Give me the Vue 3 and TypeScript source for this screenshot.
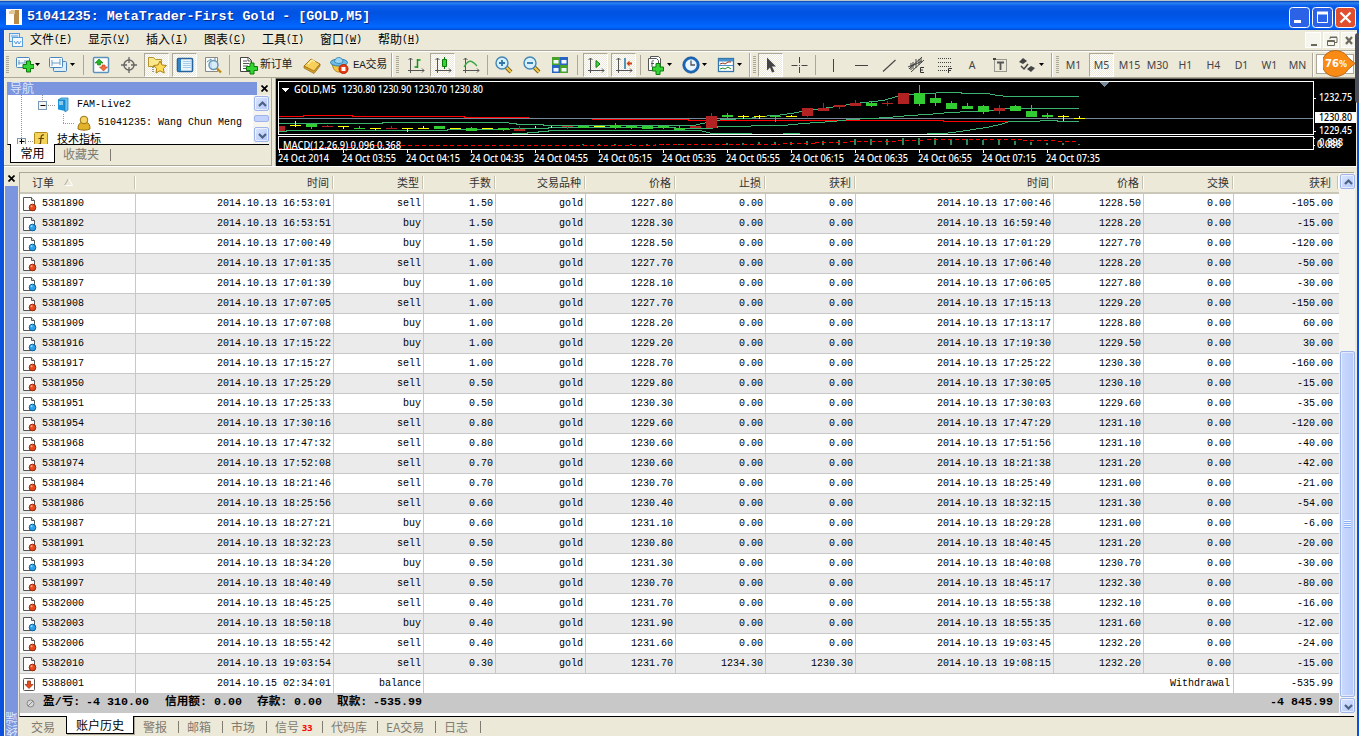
<script setup lang="ts">
type Tool = [kind: string, gap: number, width: number, label?: string]

const glyphs: Record<string, string> = {
  newchart: '<rect x="2.500" y="2.500" width="13" height="10" rx="1" fill="#f4faff" stroke="#4a86b8"/><path d="M5 5v5M4 8h8M11 5v3" stroke="#6f9cc0" fill="none"/><path d="M9 9.500h3.500V6h4v3.500H20v4h-3.500V17h-4v-3.500H9z" fill="#35d435" stroke="#0a7a0a"/>',
  profiles: '<rect x="5.500" y="6.500" width="13" height="10" rx="1" fill="#dcecf8" stroke="#4a86b8"/><rect x="1.500" y="2.500" width="13" height="10" rx="1" fill="#f8fcff" stroke="#4a86b8"/><path d="M4 5v6M12 4v6M4 8h8" stroke="#6f9cc0" fill="none"/>',
  market: '<rect x="2.500" y="2.500" width="15" height="15" rx="1" fill="#fff" stroke="#5b93bd" stroke-width="1.500"/><path d="M8 4l4 4H9.500v2h-3V8H4z" fill="#28b428" stroke="#0a7a0a" stroke-width=".6"/><path d="M12.500 16l-4-4H11v-2h3v2h2.500z" fill="#f07040" stroke="#b33810" stroke-width=".6"/>',
  target: '<circle cx="10" cy="10" r="5" fill="none" stroke="#666" stroke-width="1.400"/><path d="M10 2v6M10 12v6M2 10h6M12 10h6" stroke="#666" stroke-width="1.300"/>',
  favorites: '<path d="M1.500 11.500v-9h5l2 2h6v7z" fill="#fbe88c" stroke="#b5932d"/><path d="M6 12v6" stroke="#444" stroke-dasharray="1 1"/><path d="M13 6l2 4 4.500.5-3.200 3 .9 4.500-4.200-2.200L9 18l.7-4.500-3.200-3L11 10z" fill="#ffdc55" stroke="#ad8018"/>',
  panel: '<rect x="2.500" y="3.500" width="15" height="13" rx="1" fill="#e9f5ff" stroke="#27649b" stroke-width="1.600"/><path d="M3 4h3v12H3z" fill="#3782c0"/><path d="M8 6.500h8M8 8.500h8M8 10.500h8M8 12.500h8" stroke="#a8cde8"/>',
  tester: '<path d="M2.500 2.500h12v14h-12z" fill="#fafafa" stroke="#888"/><path d="M4 7l4-3v10M12 3v4" stroke="#5c91b6" fill="none"/><circle cx="10.500" cy="10" r="4.500" fill="#c8e6f8bb" stroke="#6794b4" stroke-width="1.400"/><path d="M14 13.500l4 4" stroke="#c08d17" stroke-width="2.400"/>',
  order: '<path d="M2.500 2.500h8l3 3v11h-11z" fill="#fff" stroke="#444"/><path d="M10 3v3h3M5 6h4M5 8.500h6M5 11h5M5 13.500h4" stroke="#555" fill="none"/><path d="M8.500 11.500H12V8h4v3.500h3.500v4H16V19h-4v-3.500H8.500z" fill="#35d435" stroke="#0a7a0a"/>',
  gold: '<path d="M2 11l7-7 9 5-6 8z" fill="#f8cf58" stroke="#a87818"/><path d="M2 11v2l10 5.500 6-7.500V9l-6 7z" fill="#d99f28" stroke="#946a15" stroke-width=".7"/><path d="M6 9l4-4 3 2" fill="none" stroke="#fff3b0" stroke-width="1.300"/>',
  expert: '<path d="M3 8c1 6 3 9 7 9s6-3 7-8z" fill="#f4c543" stroke="#ad8119"/><ellipse cx="10" cy="7.500" rx="8.500" ry="3.500" fill="#6ebbe5" stroke="#3180ad"/><path d="M5.500 7c0-6 8.500-6 8.500 0-2 2-6 2-8.500 0z" fill="#9ad6f3" stroke="#3f8db9"/><circle cx="14.500" cy="14" r="4.500" fill="#e63c14" stroke="#b62300"/><path d="M12.500 12h4v4h-4z" fill="#fff"/>',
  bars: '<path d="M4.500 3v15M2 15.500h16M2.500 5l2-2 2 2M16 13.500l2 2-2 2" stroke="#555" fill="none"/><path d="M11.500 4v9M11.500 5h3M8.500 12h3" stroke="#159321" stroke-width="1.500" fill="none"/>',
  candles: '<path d="M4.500 3v15M2 15.500h16M2.500 5l2-2 2 2M16 13.500l2 2-2 2" stroke="#555" fill="none"/><path d="M11.500 2v12" stroke="#0a7a0a"/><path d="M9.500 4.500h4v7h-4z" fill="#35d435" stroke="#0a7a0a"/>',
  line: '<path d="M4.500 3v15M2 15.500h16M2.500 5l2-2 2 2M16 13.500l2 2-2 2" stroke="#555" fill="none"/><path d="M3 12c4-7 7-8 13-1" stroke="#39a845" stroke-width="1.300" fill="none"/>',
  zoomin: '<path d="M12 12l5 5" stroke="#765711" stroke-width="4"/><path d="M12 12l5 5" stroke="#edc64a" stroke-width="2.400"/><circle cx="8" cy="8" r="6" fill="#d6f0fe" stroke="#4387b5" stroke-width="1.400"/><path d="M5 8h6M8 5v6" stroke="#2f77a8" stroke-width="1.800"/>',
  zoomout: '<path d="M12 12l5 5" stroke="#765711" stroke-width="4"/><path d="M12 12l5 5" stroke="#edc64a" stroke-width="2.400"/><circle cx="8" cy="8" r="6" fill="#d6f0fe" stroke="#4387b5" stroke-width="1.400"/><path d="M5 8h6" stroke="#2f77a8" stroke-width="1.800"/>',
  tile: '<path d="M2 2h8v8H2zM10 10h8v8h-8z" fill="#48a22a"/><path d="M10 2h8v8h-8zM2 10h8v8H2z" fill="#2864c4"/><path d="M3.500 5h5v3.500h-5zM11.500 5h5v3.500h-5zM3.500 13h5v3.500h-5zM11.500 13h5v3.500h-5z" fill="#eff8ff"/>',
  scroll: '<path d="M4.500 3v15M2 15.500h16M2.500 5l2-2 2 2M16 13.500l2 2-2 2" stroke="#555" fill="none"/><path d="M10 5.500v7l4-3.500z" fill="#4bd24b" stroke="#0a7a0a"/>',
  shift: '<path d="M4.500 3v15M2 15.500h16M2.500 5l2-2 2 2M16 13.500l2 2-2 2" stroke="#555" fill="none"/><path d="M11 3v11" stroke="#2377a8" stroke-width="1.500"/><path d="M12.500 8.500l3-3v2H18v2h-2.500v2z" fill="#ce4210"/>',
  indicators: '<path d="M5.500 1.500h8l2 2v10h-10z" fill="#fff" stroke="#555"/><path d="M3.500 3.500h8l2 2v10h-10z" fill="#fff" stroke="#555"/><path d="M9 6c-2-1-2 0-2 3v3M6 8.500h3" stroke="#555" fill="none"/><path d="M7.500 12H11V8.500h4V12h3.500v4H15v3.500h-4V16H7.500z" fill="#35d435" stroke="#0a7a0a"/>',
  clock: '<circle cx="10" cy="10" r="7" fill="#e8f6ff" stroke="#1b67b8" stroke-width="2.600"/><circle cx="10" cy="10" r="8.200" fill="none" stroke="#154a87" stroke-width=".6"/><path d="M10 5.500V10h4" stroke="#555" stroke-width="1.300" fill="none"/>',
  template: '<rect x="2.500" y="3.500" width="15" height="13" fill="#fff" stroke="#3276ac" stroke-width="1.300"/><path d="M3 4h14v2.500H3zM3 10h14v1H3z" fill="#4a92c8"/><path d="M4 9l3-1 2 1 3-2h3" stroke="#9a3418" fill="none"/><path d="M4 14l3-1 2 1 3-2 3 2" stroke="#208b2c" fill="none"/>',
  cursor: '<path d="M6 2.500v13l3-3 2 5 2.500-1-2.500-5h4z" fill="#444"/>',
  cross: '<path d="M10.500 2v6M10.500 12v6M2.500 10.500h6M12.500 10.500h6" stroke="#444"/><path d="M10 10h1v1h-1z" fill="#444"/>',
  vline: '<path d="M10.500 4v13" stroke="#444"/>',
  hline: '<path d="M4 10.500h13" stroke="#444"/>',
  trend: '<path d="M4 16.500L16.500 5" stroke="#444" stroke-width="1.100"/>',
  channel: '<path d="M2 14L15 2M4 17L17 5M4 8v7M6 7v7M9 4v9M12 4v6M14 3v5M1 12l7-3M5 11l10-5" stroke="#444" stroke-width="1" fill="none"/><path d="M17 12.500h-3.500v5H17M13.500 15H16" stroke="#333" fill="none"/>',
  fibo: '<path d="M3 3.500h14M3 7.500h14M3 11.500h14M3 15.500h9" stroke="#444" stroke-dasharray="1 1"/><path d="M17 13.500h-3.500V18M13.500 15.500H16" stroke="#333" fill="none"/>',
  label: '<rect x="4.500" y="4.500" width="12" height="12" fill="none" stroke="#444" stroke-dasharray="1 1"/><path d="M3 3h3v2H3z" fill="#444"/><path d="M7 7.500h7M10.500 7.500V15" stroke="#555" stroke-width="1.800"/>',
  arrows: '<path d="M2 7l4-4 4 3-4 3zM10 14l4-3 4 2-4 4zM6 9v2" fill="#444"/><path d="M4 11l3 3 4-5" fill="none" stroke="#444" stroke-width="1.500"/>',
}

const tools: Tool[] = [
  ['grip', 0, 6], ['newchart', 4, 20], ['arrow', 0, 7], ['profiles', 7, 20], ['arrow', 0, 8], ['sep', 5, 5],
  ['market', 2, 25], ['target', 3, 25], ['favorites*', 3, 25], ['panel*', 3, 25], ['tester', 3, 25], ['sep', 2, 5],
  ['order', 3, 25], ['caps', 0, 39, '新订单'], ['gold', 0, 25], ['expert', 2, 25], ['caps', 2, 36, 'EA交易'], ['end', 1, 4], ['grip', 0, 6],
  ['bars', 3, 25], ['candles*', 2, 25], ['line', 3, 25], ['sep', 2, 5], ['zoomin', 1, 25], ['zoomout', 3, 25], ['tile', 3, 25], ['sep', 3, 5],
  ['scroll*', 3, 25], ['shift*', 3, 25], ['sep', 2, 5], ['indicators', 1, 22], ['arrow', 0, 7], ['clock', 7, 21], ['arrow', 0, 7], ['template', 7, 21], ['arrow', 0, 7],
  ['end', 5, 3], ['grip', 0, 6], ['cursor*', 1, 25], ['cross', 3, 25], ['sep', 2, 5], ['vline', 2, 25], ['hline', 3, 25], ['trend', 3, 25], ['channel', 3, 25],
  ['fibo', 3, 25], ['period', 3, 24, 'A'], ['label', 3, 25], ['arrows', 4, 22], ['arrow', 0, 7], ['end', 6, 2], ['grip', 1, 6],
  ['period', 1, 25, 'M1'], ['period*', 3, 25, 'M5'], ['period', 3, 25, 'M15'], ['period', 3, 25, 'M30'], ['period', 3, 25, 'H1'],
  ['period', 3, 25, 'H4'], ['period', 3, 25, 'D1'], ['period', 3, 25, 'W1'], ['period', 3, 25, 'MN'], ['end', 1, 3],
]
const kind = (t: Tool) => t[0].replace('*', '')

const menus = [['文件', 'F'], ['显示', 'V'], ['插入', 'I'], ['图表', 'C'], ['工具', 'T'], ['窗口', 'W'], ['帮助', 'H']]

const heads = ['时间', '类型', '手数', '交易品种', '价格', '止损', '获利', '时间', '价格', '交换', '获利']

const orders = `5381890|16:53:01|sell|1.50|1227.80|17:00:46|1228.50|-105.00
5381892|16:53:51|buy|1.50|1228.30|16:59:40|1228.20|-15.00
5381895|17:00:49|buy|1.50|1228.50|17:01:29|1227.70|-120.00
5381896|17:01:35|sell|1.00|1227.70|17:06:40|1228.20|-50.00
5381897|17:01:39|buy|1.00|1228.10|17:06:05|1227.80|-30.00
5381908|17:07:05|sell|1.00|1227.70|17:15:13|1229.20|-150.00
5381909|17:07:08|buy|1.00|1228.20|17:13:17|1228.80|60.00
5381916|17:15:22|buy|1.00|1229.20|17:19:30|1229.50|30.00
5381917|17:15:27|sell|1.00|1228.70|17:25:22|1230.30|-160.00
5381950|17:25:29|sell|0.50|1229.80|17:30:05|1230.10|-15.00
5381951|17:25:33|buy|0.50|1230.30|17:30:03|1229.60|-35.00
5381954|17:30:16|sell|0.80|1229.60|17:47:29|1231.10|-120.00
5381968|17:47:32|sell|0.80|1230.60|17:51:56|1231.10|-40.00
5381974|17:52:08|sell|0.70|1230.60|18:21:38|1231.20|-42.00
5381984|18:21:46|sell|0.70|1230.70|18:25:49|1231.00|-21.00
5381986|18:25:56|sell|0.60|1230.40|18:32:15|1231.30|-54.00
5381987|18:27:21|buy|0.60|1231.10|18:29:28|1231.00|-6.00
5381991|18:32:23|sell|0.50|1230.80|18:40:45|1231.20|-20.00
5381993|18:34:20|buy|0.50|1231.30|18:40:08|1230.70|-30.00
5381997|18:40:49|sell|0.50|1230.70|18:45:17|1232.30|-80.00
5382000|18:45:25|sell|0.40|1231.70|18:55:38|1232.10|-16.00
5382003|18:50:18|buy|0.40|1231.90|18:55:35|1231.60|-12.00
5382006|18:55:42|sell|0.40|1231.60|19:03:45|1232.20|-24.00
5382010|19:03:54|sell|0.30|1231.70|19:08:15|1232.20|-15.00`
  .split('\n')
  .map((l) => {
    const [id, open, side, lots, price, close, exit, profit] = l.split('|')
    const last = id === '5382010'
    return {
      id,
      side,
      cells: ['2014.10.13 ' + open, side, lots, 'gold', price, last ? '1234.30' : '0.00', last ? '1230.30' : '0.00', '2014.10.13 ' + close, exit, '0.00', profit],
    }
  })

// Chart geometry is kept in thirds of a pixel, left edge of the pane = 0.
const candleData = `r144-159|y142-145,128-147|g137-147,137-152|r144-147,141-147|y144-147,144-152|g150-153,144-154|y150-153,151-156|r150-153,144-153|y150-153,151-161|y150-153,145-152|g144-152|y150-153|g151-158,146-158|y150-153|g151-155,151-158|r152-158,145-158|w,144-149|w,144-149|r144-148,144-152|g143-150|y144-147|g141-150,135-154|g143-150,140-152|g143-152|g143-150,140-152|g151-155,143-155|r144-151|r114-149,105-149|g111-117,105-120|y114-117,111-124|y114-117,111-122|g114-117,111-131|y114-117,111-117|r90-114,90-117|r90-99,75-99|r81-87,81-92|r75-84,66-84|g75-84,72-87|r75-78,70-84|r45-77|g45-78,21-84|g60-75,46-83|g75-93,69-93|g84-93,75-93|g84-102,81-107|r90-99,81-107|g84-99,80-99|g99-117,81-117|g111-117,105-122|y114-117,111-130|y120-123,114-122`
const tint: Record<string, string> = { r: '#b22222', g: '#32cd32', y: '#ffff00', w: '#ffff00' }
const third = (n: number) => Math.round(n / 3)
const candles = candleData.split('|').map((s, i) => {
  const [body, wick] = s.slice(1).split(',')
  const b = body ? body.split('-').map(Number) : null
  const w = wick ? wick.split('-').map(Number) : null
  return {
    color: tint[s[0]],
    x: 4 + i * 16,
    by: b ? third(b[0]) : 0,
    bh: b ? Math.max(1, third(b[1]) - third(b[0])) : 0,
    wy: w ? third(w[0]) : 0,
    wh: w ? third(w[1]) - third(w[0]) : 0,
  }
})

const steps = (pts: number[]) => {
  let out = ''
  for (let i = 0; i < pts.length; i += 2) out += `${i ? 'L' : 'M'}${third(pts[i])} ${third(pts[i + 1] - 1) + 0.5}`
  return out
}
const green = [
  steps([10, 137, 320, 137, 324, 133, 700, 133, 705, 137, 722, 137, 725, 139, 803, 139, 808, 142, 1260, 142, 1265, 138, 1285, 135, 1305, 130, 1345, 124, 1425, 121, 1450, 115, 1505, 112, 1565, 104, 1595, 98, 1665, 87, 1740, 75, 1825, 66, 1845, 61, 1875, 52, 1925, 49, 2005, 43, 2055, 43, 2065, 46, 2135, 46, 2170, 51, 2195, 55, 2412, 55]),
  steps([10, 160, 33, 160, 36, 157, 515, 157, 520, 154, 700, 154, 710, 151, 815, 151, 825, 148, 1200, 148, 1205, 151, 1305, 151, 1335, 146, 1425, 146, 1430, 143, 1525, 143, 1585, 137, 1675, 129, 1725, 125, 1785, 122, 1840, 118, 1905, 111, 1955, 108, 2025, 104, 2085, 101, 2145, 97, 2195, 92, 2412, 92]),
  steps([710, 166, 755, 166, 758, 163, 790, 163, 793, 160, 818, 160, 821, 157, 1275, 157, 1300, 163, 1310, 166, 1430, 166]),
  steps([1525, 166, 1575, 166]),
  steps([1955, 166, 2005, 166, 2035, 162, 2095, 153, 2135, 147, 2175, 139, 2205, 131, 2290, 131, 2300, 127, 2345, 127, 2350, 131, 2412, 131]),
]
const red = steps([10, 116, 84, 116, 84, 113, 231, 113, 231, 116, 567, 116, 567, 119, 759, 119, 759, 122, 951, 122, 951, 125, 1239, 125, 1239, 128, 2005, 128, 2005, 131, 2215, 131])
const signal = [
  steps([10, 212, 120, 212, 120, 208, 230, 208, 230, 203, 1140, 203, 1140, 199, 1515, 199]),
  steps([1525, 197, 1620, 197]), steps([1620, 194, 1722, 194]), steps([1725, 191, 1865, 191]), steps([1868, 188, 1950, 188]),
  steps([1955, 185, 2245, 185]), steps([2245, 188, 2345, 188]), steps([2350, 191, 2412, 191]),
]
const macd = [199, 199, 199, 199, 199, 199, 199, 199, 199, 195, 195, 192, 192, 192, 190, 190, 186, 183, 183, 182, 180, 180, 180, 183, 183, 185, 186, 190, 192, 195, 195, 198]
  .map((v, i) => ({ x: 307 + i * 16, y: third(v), h: Math.max(1, 67 - third(v)) }))
const times = ['24 Oct 2014', '03:55', '04:15', '04:35', '04:55', '05:15', '05:35', '05:55', '06:15', '06:35', '06:55', '07:15', '07:35']
  .map((t, i) => ({ x: 3 + i * 64, text: i ? '24 Oct ' + t : t, w: i ? 54 : 51 }))
const labels = [
  { x: 19, y: 15, w: 42, text: 'GOLD,M5' }, { x: 67, y: 15, w: 141, text: '1230.80 1230.90 1230.70 1230.80' },
  { x: 8, y: 71, w: 118, text: 'MACD(12,26,9) 0.096 0.368' },
  { x: 1044, y: 23, w: 33, text: '1232.75' }, { x: 1044, y: 56, w: 33, text: '1229.45' },
  { x: 1044, y: 68, w: 24, text: '0.898' }, { x: 1042, y: 70, w: 24, text: '0.086' },
  ...times.map((t) => ({ ...t, y: 84 })),
]

const summary = [['盈/亏:', '-4 310.00', 43, 79], ['信用额:', '0.00', 49, 43], ['存款:', '0.00', 37, 43], ['取款:', '-535.99', 36, 80]] as const
const tabs = [['警报', 44], ['邮箱', 44], ['市场', 44], ['信号', 56], ['代码库', 55], ['EA交易', 58], ['日志', 45]] as const
</script>

<template>
  <div class="window">
    <header class="title">
      <svg class="logo" width="16" height="16"><rect width="16" height="16" fill="#fff" /><path d="M3 3l3-2h7v14H8V5H3z" fill="#b98b48" /><path d="M3 3l3-2h3v4H3z" fill="#e2c896" /></svg>
      <span class="caption">51041235: MetaTrader-First Gold - [GOLD,M5]</span>
      <div class="winbtns">
        <svg width="21" height="21"><rect class="wb" x=".5" y=".5" width="20" height="20" rx="3" /><path d="M5 13h7v3H5z" fill="#fff" /></svg>
        <svg width="21" height="21"><rect class="wb" x=".5" y=".5" width="20" height="20" rx="3" /><path d="M5.500 6v9.500h10V6M5 6h11" fill="none" stroke="#fff" /><path d="M5 4.500h11v3H5z" fill="#fff" /></svg>
        <svg width="21" height="21"><rect class="wb close" x=".5" y=".5" width="20" height="20" rx="3" /><path d="M5.500 5.500l10 10M15.500 5.500l-10 10" stroke="#fff" stroke-width="2.200" /></svg>
      </div>
    </header>

    <div class="client">
      <nav class="menu">
        <svg class="mlogo" width="14" height="14"><rect x=".5" y=".5" width="10" height="8" fill="#dff0fc" stroke="#5b9bd8" /><rect x="3.500" y="4.500" width="10" height="9" fill="#f4fbff" stroke="#5b9bd8" /><path d="M5 8l2 3 1.500-3 1.500 3 2-3M2 3h7" fill="none" stroke="#5b9bd8" /></svg>
        <span v-for="m in menus" :key="m[1]" class="mi">{{ m[0] }}<i>(<u>{{ m[1] }}</u>)</i></span>
        <div class="mdi">
          <svg width="16" height="16"><path d="M5 11h6v2H5z" fill="#6b685c" /></svg>
          <svg width="16" height="16"><path d="M6 6V4.500h7v5h-2M6 4h7" stroke="#6b685c" fill="none" /><path d="M3.500 7.500h7v5h-7zM3 8.500h7" stroke="#6b685c" fill="none" /></svg>
          <svg width="16" height="16"><path d="M4 4l6 7M10 4l-6 7" stroke="#6b685c" stroke-width="2.200" /></svg>
        </div>
      </nav>

      <div class="toolbar">
        <div v-for="(t, i) in tools" :key="i" class="tool" :class="[kind(t), { on: t[0].endsWith('*') }]" :style="{ marginLeft: t[1] + 'px', width: t[2] + 'px' }">
          <svg v-if="glyphs[kind(t)]" width="20" height="20" v-html="glyphs[kind(t)]"></svg>
          <svg v-else-if="t[0] === 'arrow'" width="5" height="3"><path d="M0 0h5L2.500 3z" /></svg>
          <template v-else>{{ t[3] }}</template>
        </div>
        <div class="field"></div>
      </div>

      <section class="upper">
        <aside class="navigator">
          <div class="navhead"><span class="navtitle">导航</span><svg width="7" height="7"><path d="M.5.5l6 6M6.500.5l-6 6" stroke="#000" stroke-width="1.700" /></svg></div>
          <div class="treebox">
            <div class="tree">
              <svg class="guides" width="246" height="49">
                <path d="M13.500 0v49M34.500 0v5M40 10.500h8M55.500 19v9M55 28.500h12M20 46.500h6" fill="none" stroke="#999" stroke-dasharray="1 1" />
                <rect x="30.500" y="6.500" width="8" height="8" fill="#f4f3ee" stroke="#7898b5" /><path d="M32.500 10.500h5" stroke="#000" />
                <rect x="9.500" y="43.500" width="8" height="8" fill="#f4f3ee" stroke="#7898b5" /><path d="M11.500 46.500h5M13.500 44v5" stroke="#000" />
              </svg>
              <div class="node n1"><svg width="12" height="16"><path d="M1 3l7-2v13l-7-1.500z" fill="#1a94dc" /><path d="M1 3l3-2h7v12l-3 2V3z" fill="#6fc5f2" stroke="#1379b8" stroke-width=".7" /><path d="M2 5h4M2 7h4" stroke="#fff" /></svg>FAM-Live2</div>
              <div class="node n2"><svg width="14" height="16"><path d="M1 14c0-5 2-6 4-7h4c3 1 4 3 4 7-3 1.500-9 1.500-12 0z" fill="#e2b32a" stroke="#9a7410" /><circle cx="7" cy="5" r="3.800" fill="#f5d568" stroke="#9a7410" /></svg>51041235: Wang Chun Meng</div>
              <div class="node n3"><svg width="14" height="12"><rect x=".5" y=".5" width="13" height="13" rx="1" fill="#f5d358" stroke="#b28a1c" /><path d="M10 3C7 2 7 5 6.500 11c0 1-1 1.500-2 1M4.500 6.500H10" fill="none" stroke="#634400" stroke-width="1.200" /></svg><span>技术指标</span></div>
            </div>
            <div class="vbar small">
              <svg width="15" height="15" class="sb"><path d="M4 9l3.500-3.500L11 9" /></svg>
              <div class="mini"></div>
              <svg width="15" height="15" class="sb"><path d="M4 6l3.500 3.500L11 6" /></svg>
            </div>
          </div>
          <div class="navtabs"><b>常用</b><span>收藏夹</span><em></em></div>
        </aside>

        <svg class="chart" width="1081" height="88" shape-rendering="crispEdges">
          <rect width="1081" height="88" fill="#000" /><rect width="1081" height="1" fill="#716f64" /><rect width="1" height="88" fill="#aca899" />
          <path :d="red" fill="none" stroke="#f00" />
          <path d="M4 40.500h1035" stroke="#778899" />
          <path v-for="(g, i) in green" :key="i" :d="g" fill="none" stroke="#3cb371" />
          <g v-for="(c, i) in candles" :key="'c' + i" :fill="c.color">
            <rect :x="i ? c.x + 11 - 16 : 4" :y="c.by" :width="i ? 11 : 6" :height="c.bh" /><rect :x="c.x" :y="c.wy" width="1" :height="c.wh" />
          </g>
          <rect v-for="(m, i) in macd" :key="'m' + i" :x="m.x" :y="m.y" width="2" :height="m.h" fill="#2e8b57" />
          <path v-for="(s, i) in signal" :key="'s' + i" :d="s" fill="none" stroke="#f00" stroke-dasharray="4 3" />
          <path d="M3.500 3.500h1035v53h-1035zM3.500 58.500h1035v13h-1035z" fill="none" stroke="#fff" />
          <path d="M1039 20.500h2M1039 53.500h2M1039 60.500h1M1039 67.500h1" stroke="#fff" />
          <path d="M7 10h7l-3.500 4z" fill="#fff" /><path d="M825 4h9l-4.500 5z" fill="#778899" />
          <path v-for="t in times" :key="t.x" :d="`M${t.x + 1.5} 72v3`" stroke="#fff" />
          <g class="ct">
            <text v-for="(l, i) in labels" :key="i" :x="l.x" :y="l.y" :textLength="l.w" lengthAdjust="spacingAndGlyphs">{{ l.text }}</text>
            <rect x="1040" y="34" width="41" height="11" fill="#fff" />
            <text x="1044" y="43" textLength="33" lengthAdjust="spacingAndGlyphs" class="now">1230.80</text>
          </g>
        </svg>
      </section>

      <section class="lower">
        <div class="strip"><svg width="7" height="7"><path d="M.5.5l6 6M6.500.5l-6 6" stroke="#000" stroke-width="1.700" /></svg><div class="bar"><span>终端</span></div></div>
        <div class="terminal">
          <div class="gridwrap">
            <div class="table">
              <div class="row head"><div>订单 <svg width="9" height="8"><path d="M.5 7.500L4.500.5" stroke="#aca899" /><path d="M4.500.5l4 7h-8" stroke="#fff" fill="none" /></svg></div><div v-for="(h, i) in heads" :key="i">{{ h }}</div></div>
              <div v-for="o in orders" :key="o.id" class="row">
                <div>
                  <svg width="15" height="16"><path d="M1.500 1.500h8l3 3v10h-11z" fill="#fff" stroke="#555" /><path d="M9.500 1.500v3h3" fill="#ddd" stroke="#555" /><circle cx="10.500" cy="11.500" r="3.300" :fill="o.side === 'buy' ? '#2ba0e8' : '#e84a1c'" :stroke="o.side === 'buy' ? '#0a5f9c' : '#9a2400'" /><circle cx="9.500" cy="10.300" r="1" fill="#fff" opacity=".6" /></svg>{{ o.id }}
                </div>
                <div v-for="(c, i) in o.cells" :key="i">{{ c }}</div>
              </div>
              <div class="row balance">
                <div><svg width="15" height="16"><rect x="1.500" y="2.500" width="11" height="12" rx="1" fill="#fff" stroke="#555" /><path d="M5.500 5h3v3.500H11L7 12.500 3 8.500h2.500z" fill="#e84a1c" stroke="#8c2a08" stroke-width=".7" /></svg>5388001</div>
                <div>2014.10.15 02:34:01</div><div>balance</div><div class="wide">Withdrawal</div><div>-535.99</div>
              </div>
              <div class="sum">
                <svg width="9" height="9"><circle cx="4.500" cy="4.500" r="3.500" fill="#d8d8d8" stroke="#888" /><path d="M2 7l5-5" stroke="#888" /></svg>
                <template v-for="s in summary" :key="s[0]"><span :style="{ width: s[2] + 'px' }">{{ s[0] }}</span><span :style="{ width: s[3] + 'px' }">{{ s[1] }}</span></template>
                <strong>-4 845.99</strong>
              </div>
            </div>
            <div class="vbar">
              <svg width="15" height="15" class="sb"><path d="M4 9l3.500-3.500L11 9" /></svg>
              <div class="track"></div>
              <div class="thumb"><i></i></div>
              <svg width="15" height="15" class="sb"><path d="M4 6l3.500 3.500L11 6" /></svg>
            </div>
          </div>
          <div class="tabs">
            <span class="t0">交易</span><b>账户历史</b>
            <span v-for="t in tabs" :key="t[0]" class="t" :style="{ width: t[1] + 'px' }">{{ t[0] }}<sub v-if="t[0] === '信号'">33</sub></span>
          </div>
        </div>
      </section>
    </div>
    <div class="edge"></div>
    <svg class="badge" width="34" height="30"><path d="M12 1.500c6 0 11 3 13 7l7 6-7 6c-2 4-7 7-13 7A13 13 0 0 1 12 1.500z" fill="#f98a14" stroke="#b96a1c" stroke-width="1" /><text x="2" y="18" textLength="14" lengthAdjust="spacingAndGlyphs" class="big">76</text><text x="16" y="18" textLength="8" lengthAdjust="spacingAndGlyphs" class="pct">%</text></svg>
  </div>
</template>

<style>
body { margin: 0; overflow: hidden; }
</style>

<style scoped>
* { box-sizing: border-box; }
svg { display: block; flex: none; }
.window { position: relative; width: 1359px; height: 736px; display: flex; flex-direction: column; background: #0a51df; font: 12px/1 "Liberation Mono", "Noto Sans CJK SC", monospace; overflow: hidden; white-space: nowrap; }
.title { height: 30px; flex: none; display: flex; align-items: center; padding: 3px 3px 0 6px; border-top: 1px solid #b9c3cc; background: linear-gradient(#0a3fb0 0, #2a83f5 2px, #0a5ce8 5px, #0053e1 12px, #0058ec 18px, #0068ff 25px, #0060f4 27px, #003fc0 30px); }
.caption { margin-left: 5px; font-size: 13.300px; font-weight: bold; color: #fff; text-shadow: 1px 1px #0b2b83; }
.winbtns { margin-left: auto; display: flex; gap: 2px; }
.wb { fill: #2c63e6; stroke: #fff; }
.wb.close { fill: #e1502e; }
.client { flex: 1; min-height: 0; display: flex; flex-direction: column; margin: 0 2px 0 4px; background: #ece9d8; box-shadow: inset 1px 0 #fff8; }
.menu { height: 20px; flex: none; display: flex; align-items: center; padding: 0 0 1px 5px; }
.mi { width: 42px; margin-right: 16px; display: flex; align-items: center; color: #000; font-family: "Noto Sans CJK SC", sans-serif; padding-bottom: 1px; }
.mlogo { margin-right: 7px; }
.mi i { font: 10px "Liberation Mono", monospace; }
.mdi { margin-left: auto; display: flex; gap: 2px; }
.mdi svg { background: #f6f5ee; border: 1px solid #fff; }
.toolbar { height: 28px; flex: none; display: flex; align-items: center; border-top: 1px solid #aca899; border-bottom: 1px solid #aca899; box-shadow: inset 0 1px #fff; padding-top: 1px; }
.tool { height: 24px; flex: none; display: flex; align-items: center; justify-content: center; color: #444; border: 1px solid transparent; }
.tool.on { background: repeating-conic-gradient(#fff 0 25%, #ece9d8 0 50%) 0 0 / 2px 2px; border-color: #aca899 #fff #fff #aca899; }
.tool.period { font: 10.500px "Noto Sans", sans-serif; }
.tool.caps { font: 11px "Liberation Mono", "Noto Sans CJK SC", monospace; justify-content: flex-start; border: 0; color: #222; padding-bottom: 3px; letter-spacing: -.3px; }
.tool.grip { border: 0; background: repeating-linear-gradient(#aca899 0 1px, #fff0 1px 2px) center / 3px 18px no-repeat; }
.tool.sep { border: 0; background: linear-gradient(#aca899, #aca899) center / 1px 20px no-repeat; }
.tool.end { border: 0; background: linear-gradient(90deg, #aca899 50%, #fff 50%) center / 2px 26px no-repeat; }
.tool.arrow { border: 0; }
.field { flex: 1; align-self: stretch; margin: 2px 3px 3px 2px; background: #fff; border: 1px solid #aca899; }
.upper { height: 89px; flex: none; display: flex; border-bottom: 1px solid #fff; }
.navigator { width: 268px; margin-right: 3px; border-right: 1px solid #aca899; border-bottom: 1px solid #aca899; height: 88px; padding: 2px 2px 0 3px; display: flex; flex-direction: column; }
.navhead { height: 15px; display: flex; align-items: center; padding-top: 1px; }
.navtitle { width: 250px; height: 13px; margin-right: 4px; background: #7b96df; color: #dde6fa; padding-left: 3px; line-height: 12px; font-family: "Noto Sans CJK SC", sans-serif; }
.treebox { height: 50px; display: flex; border-bottom: 1px solid #000; border-left: 1px solid #aca899; background: #fff; overflow: hidden; }
.tree { position: relative; width: 246px; overflow: hidden; font-size: 10px; }
.guides { position: absolute; left: 0; top: 0; }
.node { position: relative; display: flex; align-items: center; height: 19px; }
.n1 { padding-left: 49px; gap: 8px; }
.n2 { padding-left: 69px; gap: 7px; height: 18px; }
.n3 { padding-left: 26px; gap: 9px; height: 12px; font: 11px/11px "Noto Sans CJK SC", sans-serif; }
.navtabs { display: flex; font-family: "Noto Sans CJK SC", sans-serif; color: #7f7b70; margin-top: -1px; }
.navtabs b { width: 45px; margin-left: 3px; height: 19px; border: 1px solid #000; border-top: 0; background: #fff; color: #000; font-weight: normal; text-align: center; line-height: 17px; }
.navtabs span { margin-left: 8px; line-height: 19px; }
.navtabs em { width: 1px; height: 12px; margin: 5px 0 0 11px; background: #7f7b70; }
.ct { fill: #fff; font: 500 10px "Noto Sans", sans-serif; shape-rendering: auto; }
.ct .now { fill: #000; }
.lower { flex: 1; min-height: 0; display: flex; padding-top: 5px; }
.strip { width: 15px; display: flex; flex-direction: column; padding: 3px 1px 0; align-items: center; }
.bar { width: 13px; flex: 1; margin-top: 4px; background: #7b96df; color: #dde6fa; display: flex; align-items: flex-end; justify-content: center; }
.bar span { writing-mode: vertical-rl; transform: rotate(180deg); font: 12px/13px "Noto Sans CJK SC", sans-serif; }
.terminal { width: 1335px; display: flex; flex-direction: column; }
.gridwrap { height: 545px; flex: none; display: flex; border-top: 1px solid #aca899; border-left: 1px solid #aca899; border-bottom: 1px solid #000; background: #fff; }
.table { width: 1319px; display: flex; flex-direction: column; }
.row { height: 20px; flex: none; display: grid; grid-template-columns: 116px 198px 90px 72px 90px 90px 90px 90px 198px 90px 90px 105px; font-size: 10px; color: #000; }
.row > div { border-right: 1px solid #c8c8c8; border-bottom: 1px solid #c8c8c8; display: flex; align-items: center; justify-content: flex-end; padding: 1px 2px 0 0; }
.row > div:first-child { justify-content: flex-start; padding-left: 2px; gap: 5px; }
.row > div:last-child { border-right: 0; padding-right: 6px; }
.row:nth-child(odd) { background: #ebebeb; }
.head.row { height: 21px; background: #ece9d8; font: 11px "Noto Sans CJK SC", sans-serif; color: #333; border-bottom: 2px solid #cbc7b8; }
.head.row > div { border: 0; padding: 0 5px 2px 0; background: linear-gradient(90deg, #c5c2b3 50%, #fff 50%) right center / 2px 13px no-repeat; }
.head.row > div:first-child { padding-left: 12px; gap: 10px; }
.head.row > div:last-child { padding-right: 8px; }
.row.balance { background: #fff; height: 19px; }
.balance > div { border-bottom: 0; }
.balance .wide { grid-column: span 8; padding-right: 3px; }
.sum { height: 20px; display: flex; align-items: center; background: #c8c8c8; padding: 0 6px 2px 6px; font: bold 11.670px "Liberation Mono", "Noto Sans CJK SC", monospace; line-height: 14px; color: #000; }
.sum svg { margin: 2px 8px 0 0; }
.sum strong { margin-left: auto; }
.vbar { width: 16px; padding: 1px 0 0 1px; display: flex; flex-direction: column; background: #f5f4ee; }
.sb { background: linear-gradient(135deg, #dbe6fe, #b2c6f9); border: 1px solid #9fb5ea; border-radius: 2px; box-shadow: inset 0 0 0 1px #fff9; fill: none; stroke: #4d6185; stroke-width: 2.200; }
.track { height: 162px; }
.thumb { height: 346px; margin-bottom: 1px; background: linear-gradient(90deg, #cbdafe, #b8cbf9); border: 1px solid #9fb5ea; border-radius: 2px; box-shadow: inset 0 0 0 1px #fff8; display: flex; align-items: center; justify-content: center; width: 15px; }
.thumb i { width: 7px; height: 8px; background: repeating-linear-gradient(#eef4fe 0 1px, #8cb0f8 1px 2px); }
.small { height: 49px; padding: 1px 0 0 1px; }
.mini { height: 7px; width: 15px; margin: 4px 0 5px; background: #c3d3fd; border: 1px solid #9fb5ea; border-radius: 2px; }
.tabs { display: flex; font: 12px/19px "Noto Sans CJK SC", sans-serif; color: #7f7b70; }
.t0 { padding-left: 12px; width: 47px; }
.tabs b { width: 68px; height: 18px; margin: -1px 9px 0 0; line-height: 18px; background: #fff; border: 1px solid #000; border-top: 0; color: #000; font-weight: normal; text-align: center; box-shadow: 1px 1px #aca899; }
.t { display: flex; background: linear-gradient(#7f7b70, #7f7b70) right 8px top 4px / 1px 12px no-repeat; }
.t sub { color: #f00; font: bold 9px/22px "Noto Sans", sans-serif; margin-left: 3px; }
.edge { position: absolute; right: 0; top: 33px; width: 4px; height: 70px; background: #4a4e58; border-radius: 3px 0 0 3px; }
.badge { position: absolute; left: 1323px; top: 49px; }
.big { font: bold 11px "DejaVu Sans", sans-serif; fill: #fff; }
.pct { font: bold 9px "DejaVu Sans", sans-serif; fill: #fff; }
</style>
